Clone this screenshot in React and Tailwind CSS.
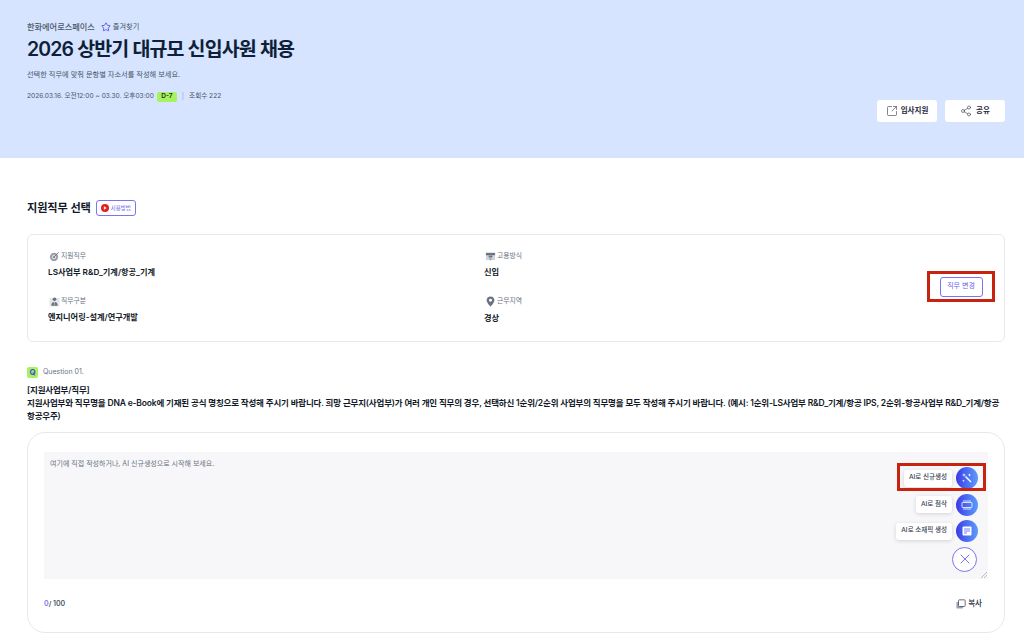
import { Play, Star, SquareArrowOutUpRight, Share2, X } from 'lucide-react';

const font = { fontFamily: '"Inter", "Noto Sans CJK KR", sans-serif' };

function TargetIcon() {
  return (
    <svg viewBox="0 0 12 12" className="w-[11px] h-[11px]">
      <circle cx="5.5" cy="6.5" r="4.5" fill="#9ca3af" />
      <circle cx="5.5" cy="6.5" r="2.2" fill="#e5e7eb" />
      <circle cx="5.5" cy="6.5" r="1" fill="#6b7280" />
      <path d="M5.5 6.5 10.5 1.5" stroke="#6b7280" strokeWidth="1" />
    </svg>
  );
}

function CalendarIcon() {
  return (
    <svg viewBox="0 0 12 12" className="w-[11px] h-[11px]">
      <rect x="1" y="2" width="10" height="3" fill="#6b7280" />
      <rect x="1" y="5" width="10" height="5" fill="#d1d5db" />
      <rect x="4" y="5" width="4" height="2" fill="#6b7280" />
      <rect x="5" y="7" width="2" height="3" fill="#9ca3af" />
    </svg>
  );
}

function PersonIcon() {
  return (
    <svg viewBox="0 0 12 12" className="w-[11px] h-[11px]">
      <rect x="0.5" y="2" width="11" height="9.5" fill="#e5e7eb" />
      <circle cx="6" cy="3.5" r="2" fill="#6b7280" />
      <path d="M2.5 10.5C2.5 7.5 4 6.5 6 6.5S9.5 7.5 9.5 10.5Z" fill="#6b7280" />
      <path d="M6 6.5V10" stroke="#e5e7eb" strokeWidth="0.6" />
    </svg>
  );
}

function PinIcon() {
  return (
    <svg viewBox="0 0 12 12" className="w-[11px] h-[11px]">
      <path d="M6 0.5C3.5 0.5 1.8 2.3 1.8 4.6 1.8 7.5 6 11.5 6 11.5S10.2 7.5 10.2 4.6C10.2 2.3 8.5 0.5 6 0.5Z" fill="#6b7280" />
      <circle cx="6" cy="4.6" r="1.6" fill="white" />
    </svg>
  );
}

function InfoItem({ icon, label, value }) {
  return (
    <div className="flex flex-col">
      <div className="flex items-center h-[14px] gap-[1px]">
        <span className="w-[12px] h-[12px] flex items-center justify-center">{icon}</span>
        <span className="text-[6.8px] text-gray-500">{label}</span>
      </div>
      <div className="mt-[2px] text-[8.2px] leading-[14px] font-semibold text-[#111827]">{value}</div>
    </div>
  );
}

function AiAction({ label, icon, boxed }) {
  return (
    <div className="relative flex items-center justify-end gap-[4px] h-[22px]">
      <span className="px-[5px] h-[17px] flex items-center rounded-[3px] bg-white shadow-[0_1px_4px_rgba(0,0,0,0.15)] text-[6.5px] font-medium text-gray-700 whitespace-nowrap">{label}</span>
      <span className="w-[22px] h-[22px] rounded-full bg-gradient-to-r from-[#3f35e6] to-[#5f9bfb] flex items-center justify-center text-white">{icon}</span>
      {boxed && <span className="absolute left-[-7px] right-[-8px] top-[-4px] bottom-[-2px] border-[3px] border-[#c8230f]"></span>}
    </div>
  );
}

export default function App() {
  return (
    <div style={font} className="bg-white h-[640px] overflow-hidden text-[#111827]">
      {/* Header */}
      <header className="relative h-[158px] bg-[#d6e4ff] pl-[27px] pr-[19px] pt-[20px]">
        <div className="flex items-center h-[14px]">
          <span className="text-[8.2px] font-medium text-gray-600">한화에어로스페이스</span>
          <Star className="ml-[6px] w-[10px] h-[10px] text-[#4f46e5]" strokeWidth={2} />
          <span className="ml-[2px] text-[7.2px] text-gray-600">즐겨찾기</span>
        </div>
        <h1 className="mt-[2px] text-[19.5px] leading-[26px] font-semibold tracking-[-0.045em] text-[#0f1f38]">2026 상반기 대규모 신입사원 채용</h1>
        <p className="mt-[7px] text-[7.2px] leading-[12px] text-gray-600">선택한 직무에 맞춰 문항별 자소서를 작성해 보세요.</p>
        <div className="mt-[10px] flex items-center text-[6.6px] text-gray-600 h-[11px]">
          <span>2026.03.16. 오전12:00 ~ 03.30. 오후03:00</span>
          <span className="ml-[3px] w-[20px] h-[10px] flex items-center justify-center rounded-[2px] bg-[#a6f35c] font-semibold text-[6.5px] text-gray-800">D-7</span>
          <span className="ml-[5px] text-gray-400">|</span>
          <span className="ml-[5px]">조회수 222</span>
        </div>
        <div className="absolute right-[19px] top-[100px] flex gap-[8px]">
          <button className="w-[60px] h-[22px] rounded-[3px] bg-white flex items-center justify-center gap-[3px] text-[7.5px] font-semibold text-gray-800">
            <SquareArrowOutUpRight className="w-[12px] h-[12px] text-gray-600" strokeWidth={1.4} />입사지원
          </button>
          <button className="w-[60px] h-[22px] rounded-[3px] bg-white flex items-center justify-center gap-[4px] text-[7.5px] font-semibold text-gray-800">
            <Share2 className="w-[12px] h-[12px] text-gray-600" strokeWidth={1.4} />공유
          </button>
        </div>
      </header>

      <main className="pl-[27px] pr-[19px]">
        {/* Section title */}
        <div className="mt-[42px] flex items-center h-[16px]">
          <h2 className="text-[11.2px] font-semibold tracking-[-0.01em]">지원직무 선택</h2>
          <button className="ml-[5px] w-[40px] h-[16px] rounded-[3px] border border-[#7c72f5] flex items-center justify-center gap-[2px] text-[5.5px] text-[#6d63ee]">
            <span className="w-[8px] h-[8px] rounded-full bg-[#e5201d] flex items-center justify-center">
              <Play className="w-[4px] h-[4px] text-white" fill="currentColor" strokeWidth={0} />
            </span>
            사용방법
          </button>
        </div>

        {/* Job info */}
        <section className="relative mt-[18px] h-[108px] rounded-[6px] border border-[#e7e7f0] pl-[20px] pt-[14px]">
          <div className="grid grid-cols-[436px_1fr] gap-y-[15px]">
            <InfoItem icon={<TargetIcon />} label="지원직무" value="LS사업부 R&D_기계/항공_기계" />
            <InfoItem icon={<CalendarIcon />} label="고용방식" value="신입" />
            <InfoItem icon={<PersonIcon />} label="직무구분" value="엔지니어링-설계/연구개발" />
            <InfoItem icon={<PinIcon />} label="근무지역" value={<span className="block mt-[1px]">경상</span>} />
          </div>
          <div className="absolute right-[9px] top-[36px] w-[68px] h-[31px] border-[3px] border-[#c8230f] flex items-center justify-center">
            <button className="w-[43px] h-[20px] rounded-[3px] border border-[#7c72f5] text-[7px] text-[#6d63ee]">직무 변경</button>
          </div>
        </section>

        {/* Question */}
        <div className="mt-[24px] flex items-center h-[12px] gap-[5px]">
          <span className="w-[11px] h-[11px] rounded-[2px] bg-[#a6f35c] flex items-center justify-center text-[8px] font-bold text-[#4f46e5]">Q</span>
          <span className="text-[7px] text-gray-500">Question 01.</span>
        </div>
        <p className="mt-[6px] text-[8.5px] leading-[13px] font-semibold tracking-[-0.02em] text-[#111827]">
          [지원사업부/직무]<br />
          지원사업부와 직무명을 DNA e-Book에 기재된 공식 명칭으로 작성해 주시기 바랍니다. 희망 근무지(사업부)가 여러 개인 직무의 경우, 선택하신 1순위/2순위 사업부의 직무명을 모두 작성해 주시기 바랍니다. (예시: 1순위-LS사업부 R&D_기계/항공 IPS, 2순위-항공사업부 R&D_기계/항공<br />
          항공우주)
        </p>

        {/* Answer */}
        <section className="mt-[9px] h-[201px] rounded-[18px] border border-[#e7e7f0] px-[16px] pt-[19px]">
          <div className="relative h-[127px] bg-[#f7f7f9] pl-[6px] pt-[7px]">
            <span className="block text-[7px] leading-[10px] text-gray-500">여기에 직접 작성하거나, AI 신규생성으로 시작해 보세요.</span>
            <div className="absolute right-[10px] top-[15px] flex flex-col items-end gap-[4.5px]">
              <AiAction label="AI로 신규생성" boxed icon={
                <svg viewBox="0 0 12 12" className="w-[12px] h-[12px]" fill="white">
                  <path d="M4 5 5 4 10.5 9.5 9.5 10.5Z" />
                  <path d="M3 1l.5 1.5L5 3l-1.5.5L3 5l-.5-1.5L1 3l1.5-.5Z" />
                  <path d="M8.5 1.5l.5 1 1 .5-1 .5-.5 1-.5-1-1-.5 1-.5Z" />
                  <path d="M2.5 7.5l.4.9.9.4-.9.4-.4.9-.4-.9-.9-.4.9-.4Z" />
                </svg>
              } />
              <AiAction label="AI로 첨삭" icon={
                <svg viewBox="0 0 12 12" className="w-[12px] h-[12px]" fill="none" stroke="white" strokeWidth="0.8">
                  <rect x="1" y="3.5" width="10" height="5" rx="0.5" />
                  <path d="M2 2h8M2 10h8" />
                </svg>
              } />
              <AiAction label="AI로 소재픽 생성" icon={
                <svg viewBox="0 0 12 12" className="w-[12px] h-[12px]">
                  <rect x="1.5" y="1.5" width="9" height="9" rx="1" fill="white" />
                  <path d="M3 4h6M3 6h6M3 8h3" stroke="#4f5ff0" strokeWidth="0.8" />
                </svg>
              } />
              <button className="mr-[1px] w-[25px] h-[25px] rounded-full bg-white border border-[#7c72f5] flex items-center justify-center text-[#5b50ee]">
                <X className="w-[16px] h-[16px]" strokeWidth={1.2} />
              </button>
            </div>
            <svg className="absolute right-[1px] bottom-[1px] w-[6px] h-[6px] text-gray-400" viewBox="0 0 6 6" stroke="currentColor" strokeWidth="0.7">
              <path d="M0 6 6 0M3 6 6 3" />
            </svg>
          </div>
          <div className="mt-[19px] flex items-center justify-between h-[12px] pr-[6px]">
            <span className="text-[7px] font-semibold text-gray-600"><span className="text-[#7c72f5]">0</span>/ 100</span>
            <span className="flex items-center gap-[2px] text-[7.5px] font-medium text-gray-800">
              <svg viewBox="0 0 12 12" className="w-[10px] h-[10px]" fill="none">
                <rect x="0.5" y="3.5" width="8" height="8" rx="1" fill="#9ca3af" />
                <rect x="3" y="1" width="8" height="8" rx="1" fill="white" stroke="#4b5563" />
              </svg>
              복사
            </span>
          </div>
        </section>
      </main>
    </div>
  );
}
